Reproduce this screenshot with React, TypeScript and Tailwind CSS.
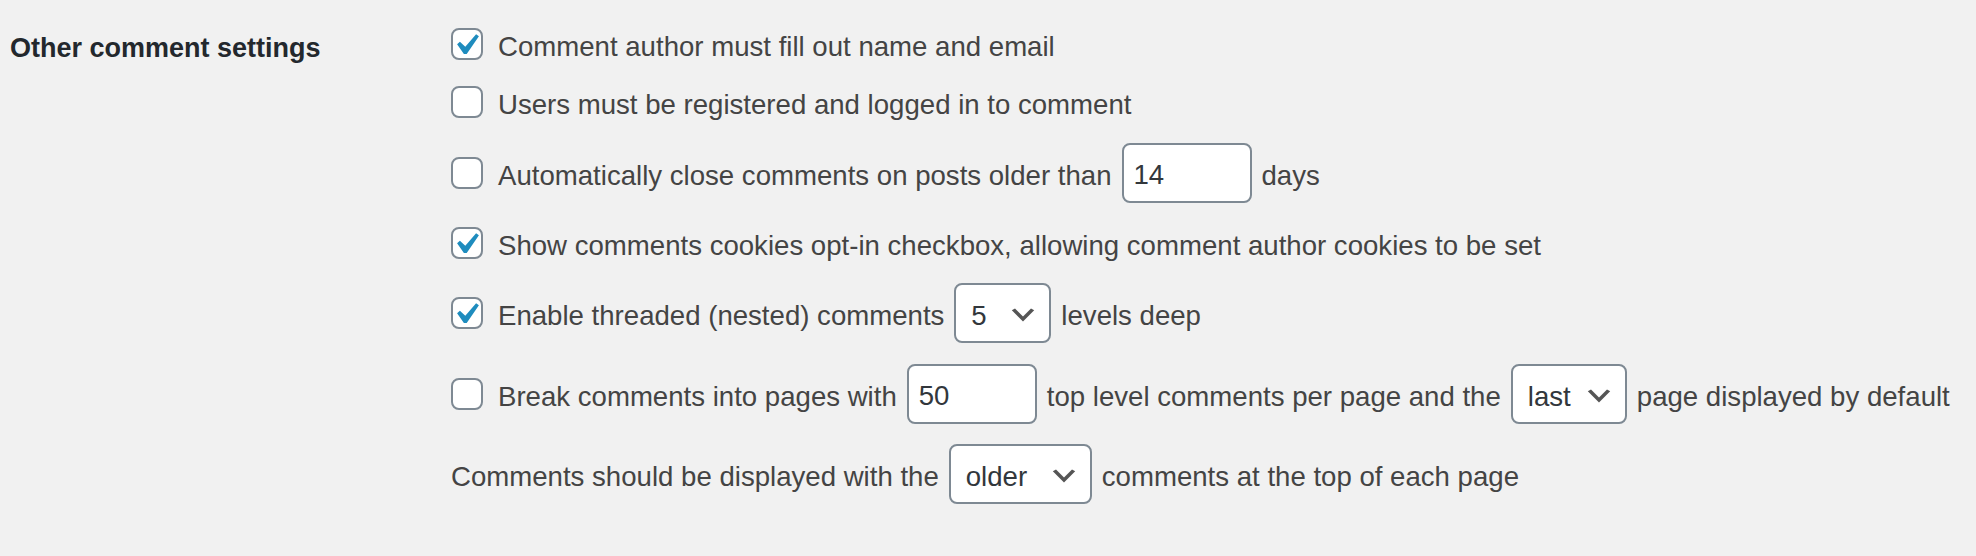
import React from "react";

const font = { fontFamily: '"Liberation Sans", Arial, sans-serif' };

function Check({ checked }: { checked?: boolean }) {
  return (
    <span className="flex h-[32px] w-[32px] shrink-0 items-center justify-center rounded-[8px] border-2 border-[#7e8993] bg-white mr-[15px] overflow-visible">
      {checked && (
        <svg viewBox="0.5 -0.5 20 20" className="h-[42px] w-[42px] shrink-0">
          <path d="M14.83 4.89l1.34.94-5.81 8.38H9.02L5.78 9.67l1.34-1.25 2.57 2.4z" fill="#1e8cbe" />
        </svg>
      )}
    </span>
  );
}

function Input({ value }: { value: string }) {
  return (
    <span className="flex h-[60px] w-[130px] shrink-0 items-center rounded-[8px] border-2 border-[#7e8993] bg-white pl-[10px] pt-[4px] text-[#32373c]">
      {value}
    </span>
  );
}

function Select({ value, w }: { value: string; w: string }) {
  return (
    <span className={`flex h-[60px] ${w} shrink-0 items-center justify-between rounded-[8px] border-2 border-[#7e8993] bg-white pl-[15px] pr-[10px] text-[#32373c]`}>
      <span className="pt-[5px]">{value}</span>
      <svg width="32" height="32" viewBox="0 0 20 20" className="mt-[4px] shrink-0">
        <path d="M5 6l5 5 5-5 2 1-7 7-7-7 2-1z" fill="#555" />
      </svg>
    </span>
  );
}

function T({ children }: { children: React.ReactNode }) {
  return <span className="pt-[5px]">{children}</span>;
}

export default function App() {
  return (
    <div className="h-[556px] w-[1976px] bg-[#f1f1f1] text-[#444]" style={font}>
      <div className="grid grid-cols-[451px_1fr] pt-[15px]">
        <div className="pl-[10px]">
          <div className="flex h-[58px] items-center pt-[8px] text-[27px] font-bold text-[#23282d]">
            Other comment settings
          </div>
        </div>
        <div className="flex flex-col text-[27.6px] leading-none whitespace-nowrap">
          <div className="flex h-[58px] items-center">
            <Check checked />
            <T>Comment author must fill out name and email</T>
          </div>
          <div className="flex h-[58px] items-center">
            <Check />
            <T>Users must be registered and logged in to comment</T>
          </div>
          <div className="mt-[12px] flex h-[60px] items-center">
            <Check />
            <div className="flex items-center gap-[10px]">
              <T>Automatically close comments on posts older than</T>
              <Input value="14" />
              <T>days</T>
            </div>
          </div>
          <div className="mt-[10px] flex h-[60px] items-center">
            <Check checked />
            <T>Show comments cookies opt-in checkbox, allowing comment author cookies to be set</T>
          </div>
          <div className="mt-[10px] flex h-[60px] items-center">
            <Check checked />
            <div className="flex items-center gap-[10px]">
              <T>Enable threaded (nested) comments</T>
              <Select value="5" w="w-[97px]" />
              <T>levels deep</T>
            </div>
          </div>
          <div className="mt-[21px] flex h-[60px] items-center">
            <Check />
            <div className="flex items-center gap-[10px]">
              <T>Break comments into pages with</T>
              <Input value="50" />
              <T>top level comments per page and the</T>
              <Select value="last" w="w-[116px]" />
              <T>page displayed by default</T>
            </div>
          </div>
          <div className="mt-[20px] flex h-[60px] items-center gap-[10px]">
            <T>Comments should be displayed with the</T>
            <Select value="older" w="w-[143px]" />
            <T>comments at the top of each page</T>
          </div>
        </div>
      </div>
    </div>
  );
}
